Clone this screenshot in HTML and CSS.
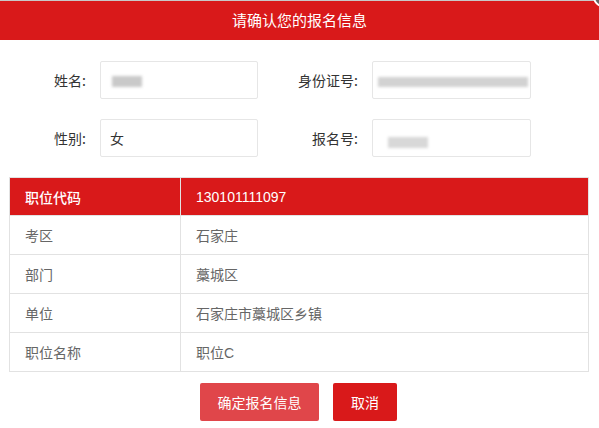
FILE: index.html
```html
<!DOCTYPE html>
<html lang="zh-CN">
<head>
<meta charset="utf-8">
<title>请确认您的报名信息</title>
<link rel="stylesheet" href="styles.css">
</head>
<body>
<div class="dialog">
  <div class="topline"></div>
  <div class="title">请确认您的报名信息</div>
  <span class="close"></span>
  <div class="form">
    <label class="lbl">姓名:</label>
    <div class="inp"><span class="blur blur-name"></span></div>
    <label class="lbl">身份证号:</label>
    <div class="inp"><span class="blur blur-id"></span></div>
    <label class="lbl">性别:</label>
    <div class="inp">女</div>
    <label class="lbl">报名号:</label>
    <div class="inp"><span class="blur blur-no"></span></div>
  </div>
  <table class="info">
    <colgroup><col class="c1"><col></colgroup>
    <tr class="head"><td>职位代码</td><td>130101111097</td></tr>
    <tr><td>考区</td><td>石家庄</td></tr>
    <tr><td>部门</td><td>藁城区</td></tr>
    <tr><td>单位</td><td>石家庄市藁城区乡镇</td></tr>
    <tr><td>职位名称</td><td>职位C</td></tr>
  </table>
  <div class="actions">
    <button class="btn btn-light">确定报名信息</button>
    <button class="btn btn-red">取消</button>
  </div>
</div>
</body>
</html>
```

FILE: styles.css
```css
html, body {
  margin: 0;
  padding: 0;
  background: #fff;
}
body {
  font-family: "Noto Sans CJK SC", "Liberation Sans", sans-serif;
  font-size: 14px;
  color: #333;
  width: 599px;
  height: 428px;
  overflow: hidden;
}
.dialog {
  position: relative;
  width: 599px;
  height: 428px;
  overflow: hidden;
}
.topline {
  height: 1px;
  background: #c8c8c8;
}
.title {
  height: 39px;
  line-height: 37px;
  background: #d9191a;
  color: #fff;
  font-size: 15px;
  text-align: center;
}
.close {
  position: absolute;
  right: -14px;
  top: -13px;
  width: 16px;
  height: 16px;
  border: 2px solid #fff;
  border-radius: 50%;
  background: #666;
}
.form {
  display: grid;
  grid-template-columns: 100px 158px 114px 159px;
  grid-auto-rows: 38px;
  row-gap: 20px;
  padding-top: 21px;
}
.lbl {
  text-align: right;
  padding-right: 14px;
  line-height: 38px;
  color: #333;
}
.inp {
  box-sizing: border-box;
  border: 1px solid #e6e6e6;
  border-radius: 2px;
  padding-left: 9px;
  line-height: 36px;
  color: #333;
  position: relative;
}
.blur {
  display: inline-block;
  background: #c9c9c9;
  filter: blur(1.5px);
  vertical-align: middle;
}
.blur-name { width: 30px; height: 11px; margin-left: 2px; margin-top: -2px; }
.blur-id { width: 150px; height: 10px; margin-left: -4px; background: #d2d2d2; }
.blur-no { width: 40px; height: 11px; margin-left: 6px; margin-top: 4px; background: #d8d8d8; }
.info {
  margin: 20px 0 0 9px;
  width: 580px;
  border-collapse: collapse;
  table-layout: fixed;
  color: #666;
  font-family: "Liberation Sans", "Noto Sans CJK SC", sans-serif;
}
.info col.c1 { width: 171px; }
.info tr { height: 39px; }
.info tr.head { height: 38px; }
.info td {
  border: 1px solid #e2e2e2;
  padding: 0 0 0 15px;
}
.info tr.head td {
  background: #d9191a;
  color: #fff;
  border-color: #e2e2e2;
}
.info tr.head td:first-child {
  font-weight: 500;
  font-family: "Noto Sans CJK SC", sans-serif;
}
.actions {
  display: flex;
  justify-content: center;
  gap: 14px;
  margin-top: 11px;
  padding-right: 2px;
}
.btn {
  height: 38px;
  border: 0;
  border-radius: 2px;
  color: #fff;
  font-family: "Noto Sans CJK SC", "Liberation Sans", sans-serif;
  font-size: 14px;
  padding: 0;
}
.btn-light {
  width: 119px;
  background: #e0464a;
}
.btn-red {
  width: 64px;
  background: #d9191a;
}
```
